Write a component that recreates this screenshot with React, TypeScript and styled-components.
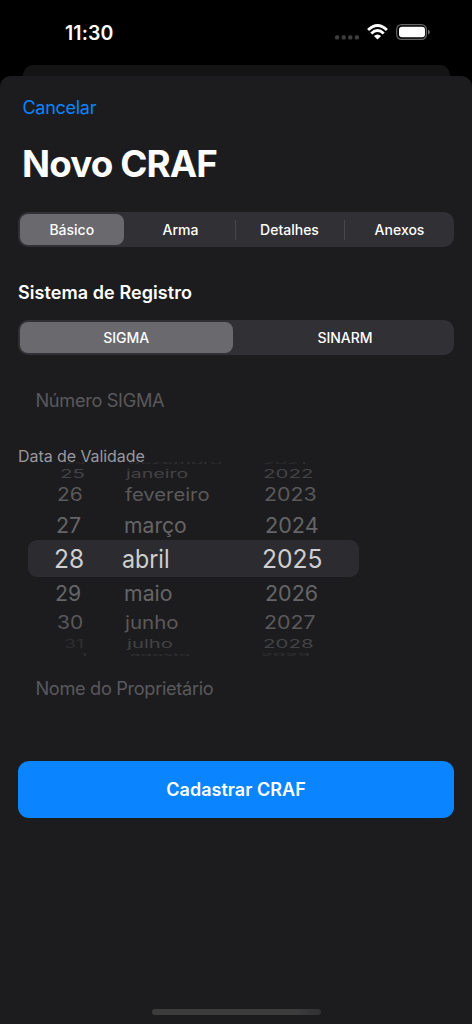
import React from "react";
import styled, { createGlobalStyle } from "styled-components";

const GlobalStyle = createGlobalStyle`
  * { box-sizing: border-box; }
  body {
    margin: 0;
    background: #000;
    font-family: Inter, "Liberation Sans", sans-serif;
    color: #fff;
  }
`;

const Screen = styled.div`
  width: 472px;
  height: 1024px;
  overflow: hidden;
  display: flex;
  flex-direction: column;
  background: #000;
`;

const StatusBar = styled.header`
  height: 65px;
  flex: none;
  display: flex;
  justify-content: space-between;
  padding: 0 41px 0 65px;
`;

const Clock = styled.time`
  line-height: 24px;
  margin-top: 21px;
  font-size: 19.5px;
  font-weight: 600;
  letter-spacing: 0.1px;
`;

const StatusIcons = styled.svg`
  width: 97px;
  height: 20px;
  margin-top: 22px;
`;

const BackSheet = styled.div`
  flex: none;
  height: 11px;
  margin: 0 22.5px;
  border-radius: 10px 10px 0 0;
  background: #141415;
`;

const Sheet = styled.main`
  flex: 1;
  display: flex;
  flex-direction: column;
  padding: 0 18px;
  border-radius: 11px 11px 0 0;
  background: #1c1c1e;
`;

const CancelButton = styled.button`
  align-self: flex-start;
  margin: 20px 0 0 4.5px;
  padding: 0;
  border: 0;
  background: none;
  font: 400 18px/24px Inter, sans-serif;
  letter-spacing: -0.28px;
  color: #0a84ff;
`;

const Title = styled.h1`
  margin: 22px 0 0 4px;
  font-size: 36.8px;
  line-height: 44px;
  font-weight: 700;
  letter-spacing: -0.9px;
`;

const Segmented = styled.div<{ $top: number }>`
  flex: none;
  display: grid;
  grid-auto-flow: column;
  grid-auto-columns: 1fr;
  height: 35px;
  margin-top: ${(p) => p.$top}px;
  border-radius: 10px;
  background: #313135;
`;

const Segment = styled.button<{ $active?: boolean; $divided?: boolean }>`
  display: flex;
  align-items: center;
  justify-content: center;
  margin: 2px ${(p) => (p.$active ? 3.5 : 2)}px 2px 2px;
  padding: 0 ${(p) => (p.$divided ? 2 : 0)}px 0 0;
  border: 0;
  border-radius: 8px;
  background: ${(p) => (p.$active ? "#69696e" : "none")};
  font: 500 14px/20px Inter, sans-serif;
  color: #fff;
  position: relative;

  &::after {
    content: "";
    display: ${(p) => (p.$divided ? "block" : "none")};
    position: absolute;
    right: -2px;
    top: 6px;
    width: 1px;
    height: 20px;
    background: #47474b;
  }
`;

const SectionTitle = styled.h2`
  margin: 34px 0 0;
  font-size: 18px;
  line-height: 24px;
  font-weight: 600;
  letter-spacing: 0.07px;
`;

const Placeholder = styled.div<{ $top: number }>`
  margin: ${(p) => p.$top}px 0 0 17.5px;
  font-size: 18.2px;
  line-height: 24px;
  letter-spacing: -0.33px;
  color: #59595c;
`;

const DateLabel = styled.div`
  margin-top: 32px;
  height: 13px;
  font-size: 16px;
  line-height: 24px;
  letter-spacing: -0.07px;
  color: #98989f;
`;

const Wheel = styled.div`
  display: flex;
  flex-direction: column;
  height: 202px;
  width: 331px;
  margin-left: 10px;
  clip-path: inset(5px 0 3px);
`;

const WheelRow = styled.div<{ $height: number; $selected?: boolean }>`
  flex: none;
  display: grid;
  grid-template-columns: 94px 140px 97px;
  align-items: center;
  height: ${(p) => p.$height}px;
  background: ${(p) => (p.$selected ? "#2c2c30" : "none")};
  clip-path: ${(p) => (p.$selected ? "inset(1px 0 round 9px)" : "none")};
`;

const WheelValue = styled.span<{
  $left: number;
  $size: number;
  $sx: number;
  $sy: number;
  $color: string;
}>`
  height: 30px;
  margin: -15px 0 -15px ${(p) => p.$left}px;
  align-self: center;
  justify-self: start;
  font-size: ${(p) => p.$size}px;
  line-height: 30px;
  white-space: nowrap;
  color: ${(p) => p.$color};
  transform: scale(${(p) => p.$sx}, ${(p) => p.$sy});
  transform-origin: left center;
`;

const Submit = styled.button`
  flex: none;
  height: 57px;
  margin-top: 61px;
  padding-top: 2px;
  border: 0;
  border-radius: 11px;
  background: #0a84ff;
  color: #fff;
  font: 600 18px/24px Inter, sans-serif;
  letter-spacing: 0.03px;
`;

const HomeIndicator = styled.div`
  width: 169px;
  height: 6px;
  margin: auto auto 9px 133.5px;
  border-radius: 3px;
  background: linear-gradient(90deg, #3c3c3d 85%, #303032);
`;

type Cell = [text: string, left: number, scaleX: number, color?: string];

interface Row {
  height: number;
  scaleY: number;
  color: string;
  selected?: boolean;
  cells: [Cell, Cell, Cell];
}

const rows: Row[] = [
  { height: 11, scaleY: 0.17, color: "#313133", cells: [["24", 37, 0.76], ["dezembro", 6, 0.88], ["2021", 0.5, 0.86]] },
  { height: 12, scaleY: 0.5, color: "#434345", cells: [["25", 32, 0.91], ["janeiro", 4, 0.87], ["2022", 0.5, 0.91]] },
  { height: 30, scaleY: 0.8, color: "#59595b", cells: [["26", 28.5, 0.93], ["fevereiro", 3, 0.9], ["2023", 1.5, 0.95]] },
  { height: 29, scaleY: 0.94, color: "#656567", cells: [["27", 28, 0.95], ["março", 1.5, 0.94], ["2024", 3, 0.96]] },
  { height: 39, scaleY: 1, color: "#cfcfd1", selected: true, cells: [["28", 26, 0.96], ["abril", -0.5, 0.91], ["2025", 0, 0.965]] },
  { height: 30, scaleY: 0.94, color: "#656567", cells: [["29", 27, 0.94], ["maio", 1.5, 0.945], ["2026", 3, 0.955]] },
  { height: 30, scaleY: 0.8, color: "#59595b", cells: [["30", 28.5, 0.93], ["junho", 3, 0.91], ["2027", 1.5, 0.95]] },
  { height: 12, scaleY: 0.5, color: "#434345", cells: [["31", 36, 0.87, "#2e2e30"], ["julho", 4.5, 0.9], ["2028", 0.5, 0.91]] },
  { height: 9, scaleY: 0.16, color: "#343436", cells: [["1", 52, 0.8, "#303032"], ["agosto", 7.5, 0.83], ["2029", -1, 0.88]] },
];

export default function App() {
  return (
    <>
      <GlobalStyle />
      <Screen>
        <StatusBar>
          <Clock>11:30</Clock>
          <StatusIcons viewBox="0 0 97 20" aria-hidden="true">
            <g fill="#3d3d3d">
              <rect x="1" y="13.2" width="4.2" height="4.4" rx="1.5" />
              <rect x="7.6" y="13.2" width="4.2" height="4.4" rx="1.5" />
              <rect x="14.2" y="13.2" width="4.2" height="4.4" rx="1.5" />
              <rect x="20.8" y="13.2" width="4.2" height="4.4" rx="1.5" />
            </g>
            <g fill="none" stroke="#fff" strokeWidth="2.9">
              <path d="M34.1 8Q43.5-.9 52.9 8" />
              <path d="M37.3 11.5Q43.5 5.7 49.7 11.5" />
            </g>
            <path d="M43.5 17.5L39.9 13.9Q43.5 10.9 47.1 13.9Z" fill="#fff" />
            <rect x="62.7" y="2.6" width="29.7" height="14.8" rx="4.8" fill="none" stroke="#656565" strokeWidth="1.2" />
            <rect x="65" y="4.7" width="26" height="10.6" rx="3" fill="#fff" />
            <path d="M94 7.7v4.9q1.9-.8 1.9-2.5T94 7.7z" fill="#777" />
          </StatusIcons>
        </StatusBar>
        <BackSheet />
        <Sheet>
          <CancelButton>Cancelar</CancelButton>
          <Title>Novo CRAF</Title>
          <Segmented $top={26}>
            <Segment $active>Básico</Segment>
            <Segment $divided>Arma</Segment>
            <Segment $divided>Detalhes</Segment>
            <Segment>Anexos</Segment>
          </Segmented>
          <SectionTitle>Sistema de Registro</SectionTitle>
          <Segmented $top={15}>
            <Segment $active>SIGMA</Segment>
            <Segment>SINARM</Segment>
          </Segmented>
          <Placeholder $top={33}>Número SIGMA</Placeholder>
          <DateLabel>Data de Validade</DateLabel>
          <Wheel>
            {rows.map((row) => (
              <WheelRow key={row.cells[2][0]} $height={row.height} $selected={row.selected}>
                {row.cells.map(([text, left, sx, color]) => (
                  <WheelValue
                    key={text}
                    $left={left}
                    $size={row.selected ? 25.5 : 22.5}
                    $sx={sx}
                    $sy={row.scaleY}
                    $color={color ?? row.color}
                  >
                    {text}
                  </WheelValue>
                ))}
              </WheelRow>
            ))}
          </Wheel>
          <Placeholder $top={17}>Nome do Proprietário</Placeholder>
          <Submit>Cadastrar CRAF</Submit>
          <HomeIndicator />
        </Sheet>
      </Screen>
    </>
  );
}
